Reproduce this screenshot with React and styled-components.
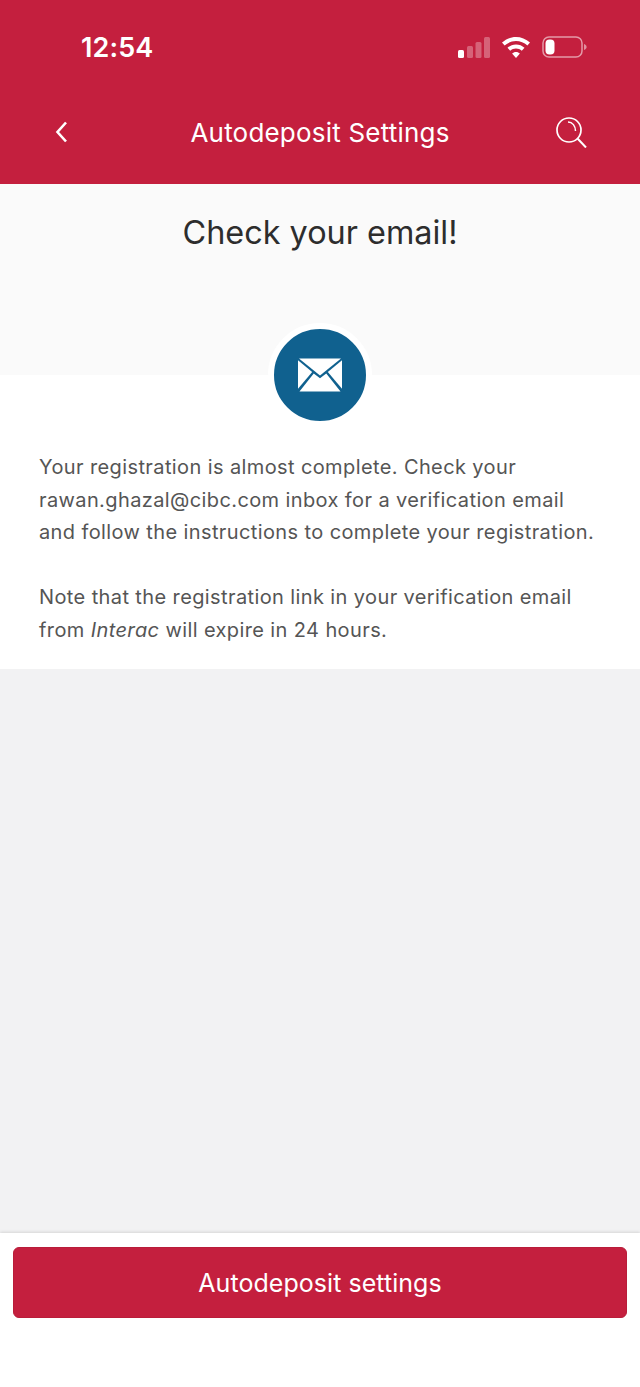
import React from 'react';
import styled, { createGlobalStyle } from 'styled-components';

const GlobalStyle = createGlobalStyle`
  html, body {
    margin: 0;
    padding: 0;
  }
  body {
    font-family: Inter, "Liberation Sans", sans-serif;
    background: #ffffff;
  }
`;

const Screen = styled.div`
  width: 640px;
  height: 1387px;
  display: flex;
  flex-direction: column;
  overflow: hidden;
`;

const Header = styled.header`
  height: 184px;
  flex: none;
  background: #c41f3e;
  color: #ffffff;
  display: flex;
  flex-direction: column;
`;

const StatusBar = styled.div`
  height: 94px;
  padding: 0 53px 0 81px;
  display: flex;
  align-items: center;
  justify-content: space-between;
`;

const Clock = styled.span`
  font-size: 27px;
  font-weight: 600;
  letter-spacing: 0.1px;
`;

const StatusIcons = styled.div`
  display: flex;
  align-items: center;
  gap: 12px;
`;

const NavBar = styled.nav`
  height: 76px;
  padding: 0 53px;
  display: grid;
  grid-template-columns: 1fr auto 1fr;
  align-items: center;
`;

const NavSide = styled.div`
  display: flex;
  justify-content: ${(props) => (props.$end ? 'flex-end' : 'flex-start')};
`;

const NavTitle = styled.h1`
  margin: 0;
  font-size: 26px;
  font-weight: 400;
  letter-spacing: 0.2px;
`;

const TitleBand = styled.section`
  height: 191px;
  flex: none;
  background: #fafafa;
  display: flex;
  justify-content: center;
  padding-top: 27px;
  box-sizing: border-box;
  position: relative;
`;

const Title = styled.h2`
  margin: 0;
  font-size: 32.4px;
  line-height: 44px;
  font-weight: 400;
  color: #2d2d2d;
`;

const Badge = styled.div`
  position: absolute;
  left: 268px;
  top: 139px;
  width: 92px;
  height: 92px;
  border: 6px solid #ffffff;
  border-radius: 50%;
  background: #10618f;
  display: flex;
  align-items: center;
  justify-content: center;
`;

const Message = styled.section`
  height: 294px;
  flex: none;
  box-sizing: border-box;
  background: #ffffff;
  padding: 76px 20px 0 39px;
`;

const Paragraph = styled.p`
  margin: 0 0 32.5px;
  font-size: 20px;
  line-height: 32.5px;
  letter-spacing: 0.39px;
  color: #555555;
  white-space: nowrap;
`;

const Filler = styled.div`
  flex: 1;
  background: #f2f2f3;
`;

const Footer = styled.footer`
  height: 154px;
  flex: none;
  box-sizing: border-box;
  background: #ffffff;
  padding: 14px 13px 0;
  box-shadow: 0 -1px 3px rgba(0, 0, 0, 0.12);
  position: relative;
`;

const ActionButton = styled.button`
  width: 100%;
  height: 71px;
  border: 1px solid #b91d3a;
  border-radius: 6px;
  background: #c41f3e;
  color: #ffffff;
  font-family: inherit;
  font-size: 25px;
  font-weight: 400;
  letter-spacing: 0.05px;
`;

function SignalIcon() {
  return (
    <svg width="32" height="21" viewBox="0 0 32 21">
      <rect x="0" y="13" width="6" height="8" rx="1.5" fill="#fff" />
      <rect x="9" y="9" width="6" height="12" rx="1.5" fill="#fff" opacity="0.3" />
      <rect x="17.5" y="5" width="6" height="16" rx="1.5" fill="#fff" opacity="0.3" />
      <rect x="26" y="0" width="6" height="21" rx="1.5" fill="#fff" opacity="0.3" />
    </svg>
  );
}

function WifiIcon() {
  return (
    <svg width="28" height="21" viewBox="0 0 28 21">
      <path d="M14 0C9 0 4 2 0 5.6l2.6 2.9C5.8 5.6 9.8 4 14 4s8.200 1.600 11.400 4.500L28 5.600C24 2 19 0 14 0z" fill="#fff" />
      <path d="M14 7.500c-3.200 0-6.200 1.200-8.500 3.300l2.700 2.900c1.600-1.400 3.600-2.200 5.800-2.200s4.200 0.800 5.800 2.200l2.700-2.900C20.200 8.700 17.200 7.500 14 7.500z" fill="#fff" />
      <path d="M14 15c-1.500 0-2.900 0.600-3.900 1.500L14 21l3.900-4.500C16.900 15.600 15.500 15 14 15z" fill="#fff" />
    </svg>
  );
}

function BatteryIcon() {
  return (
    <svg width="45" height="22" viewBox="0 0 45 22">
      <rect x="1" y="1" width="39" height="20" rx="6" fill="none" stroke="#fff" strokeOpacity="0.55" strokeWidth="1.5" />
      <rect x="3.500" y="3.500" width="9" height="15" rx="4" fill="#fff" />
      <path d="M42 8c1.600 0.500 2.600 1.600 2.600 3s-1 2.500-2.600 3z" fill="#fff" opacity="0.5" />
    </svg>
  );
}

function BackIcon() {
  return (
    <svg width="16" height="24" viewBox="0 0 16 24" fill="none">
      <path d="M13 2.500L4.500 12l8.500 9.500" stroke="#fff" strokeWidth="2.600" />
    </svg>
  );
}

function SearchIcon() {
  return (
    <svg width="31" height="31" viewBox="0 0 31 31" fill="none" stroke="#fff">
      <circle cx="13" cy="13" r="12" strokeWidth="1.700" />
      <path d="M21.500 21.500L30 30.500" strokeWidth="2" />
      <path d="M12 5c4.500 0 7.500 4 7.500 9" strokeWidth="1.500" />
    </svg>
  );
}

function EnvelopeIcon() {
  return (
    <svg width="44" height="34" viewBox="0 0 45 34">
      <path d="M1 0h43L22.500 17.500z" fill="#fff" />
      <path d="M0 2l14.500 12L0 31z" fill="#fff" />
      <path d="M45 2L30.500 14 45 31z" fill="#fff" />
      <path d="M1.500 34l14.600-18.600 6.400 5 6.400-5L43.500 34z" fill="#fff" />
    </svg>
  );
}

export default function App() {
  return (
    <Screen>
      <GlobalStyle />
      <Header>
        <StatusBar>
          <Clock>12:54</Clock>
          <StatusIcons>
            <SignalIcon />
            <WifiIcon />
            <BatteryIcon />
          </StatusIcons>
        </StatusBar>
        <NavBar>
          <NavSide>
            <BackIcon />
          </NavSide>
          <NavTitle>Autodeposit Settings</NavTitle>
          <NavSide $end>
            <SearchIcon />
          </NavSide>
        </NavBar>
      </Header>
      <TitleBand>
        <Title>Check your email!</Title>
        <Badge>
          <EnvelopeIcon />
        </Badge>
      </TitleBand>
      <Message>
        <Paragraph>
          Your registration is almost complete. Check your
          <br />
          rawan.ghazal@cibc.com inbox for a verification email
          <br />
          and follow the instructions to complete your registration.
        </Paragraph>
        <Paragraph>
          Note that the registration link in your verification email
          <br />
          from <em>Interac</em> will expire in 24 hours.
        </Paragraph>
      </Message>
      <Filler />
      <Footer>
        <ActionButton>Autodeposit settings</ActionButton>
      </Footer>
    </Screen>
  );
}
